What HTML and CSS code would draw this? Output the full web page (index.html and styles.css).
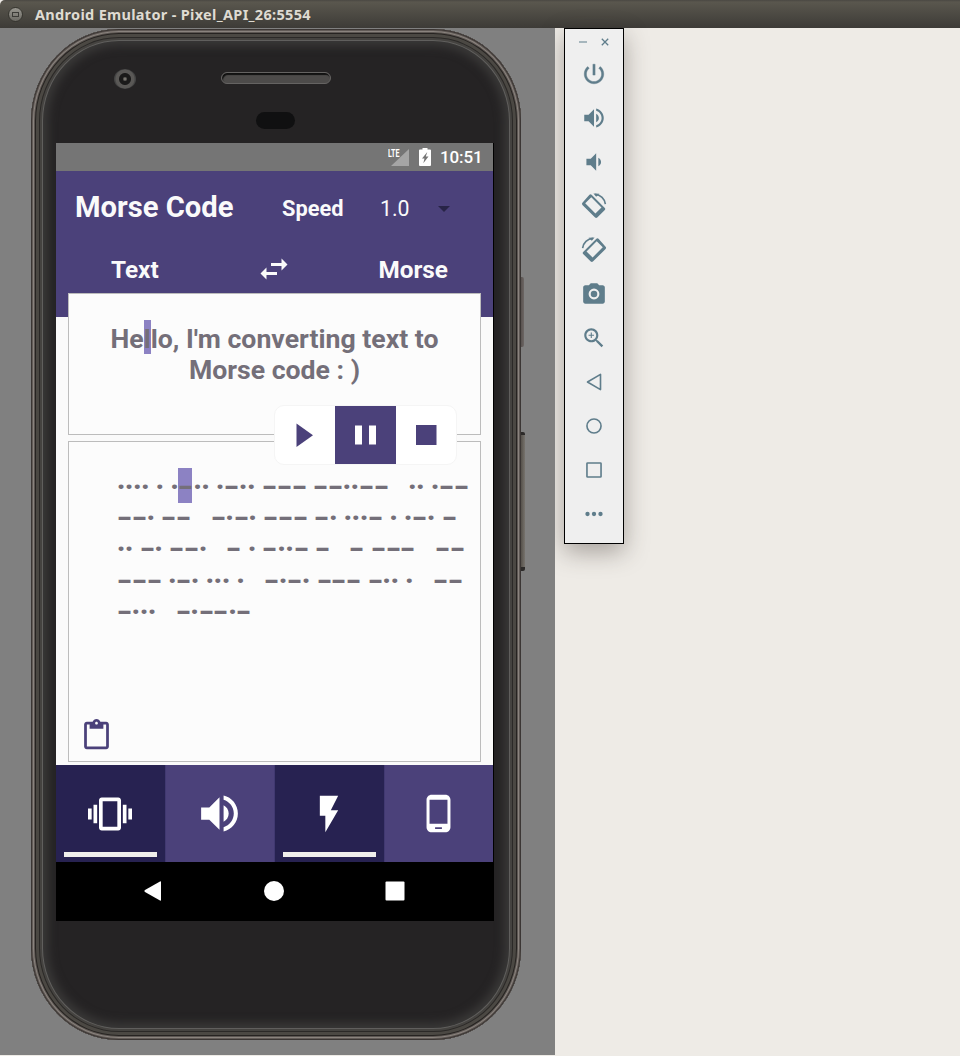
FILE: index.html
```html
<!DOCTYPE html>
<html lang="en">
<head>
<meta charset="utf-8">
<title>Android Emulator</title>
<link rel="stylesheet" href="styles.css">
</head>
<body>
<header class="titlebar"><span class="winbtn"><i></i></span><span class="wintitle">Android Emulator - Pixel_API_26:5554</span></header>
<main class="desktop">
  <section class="stage">
    <div class="rocker power"></div>
    <div class="rocker volume"></div>
    <div class="phone">
      <div class="top">
        <span class="camera"></span>
        <span class="speaker"></span>
        <span class="sensor"></span>
      </div>
      <div class="screen">
        <div class="status">
          <svg class="signal" viewBox="0 0 22 19"><path d="M22 1v17H4z" fill="#a5a5a5"/></svg>
          <span class="lte">LTE</span>
          <svg class="battery" viewBox="0 0 12 18"><path fill="#fff" fill-rule="evenodd" d="M3.500 0h5v1.500H11a1 1 0 0 1 1 1V17a1 1 0 0 1-1 1H1a1 1 0 0 1-1-1V2.500a1 1 0 0 1 1-1h2.500zM8.300 4L3 10.500h2.500L4.300 15.300 9.500 8.500H6.800z"/></svg>
          <span class="clock">10:51</span>
        </div>
        <div class="appbar">
          <div class="approw">
            <h1>Morse Code</h1><span class="speed">Speed</span><span class="value">1.0</span><i class="caret"></i>
          </div>
          <div class="modes">
            <span class="from">Text</span>
            <svg class="swap" viewBox="0 0 24 24"><path d="M6.990 11L3 15l3.990 4v-3H14v-2H6.990v-3zM21 9l-3.990-4v3H10v2h7.010v3L21 9z"/></svg>
            <span class="to">Morse</span>
          </div>
        </div>
        <div class="card input">
          <p>He<mark>l</mark>lo, I'm converting text to<br>Morse code : )</p>
          <div class="player">
            <span><svg viewBox="0 0 60 58"><path d="M21.500 17.500v23.500L38 29.200z"/></svg></span>
            <span class="on"><svg viewBox="0 0 60 58"><path d="M20 19.500h7v19h-7zM34 19.500h7v19h-7z"/></svg></span>
            <span><svg viewBox="0 0 60 58"><path d="M20 19h20.500v20H20z"/></svg></span>
          </div>
        </div>
        <div class="card output">
          <div class="morse" id="morse"></div>
          <svg class="paste" viewBox="0 0 24 24"><path d="M19 2h-4.180C14.400.840 13.300 0 12 0c-1.300 0-2.400.840-2.820 2H5c-1.100 0-2 .9-2 2v16c0 1.100.9 2 2 2h14c1.100 0 2-.9 2-2V4c0-1.100-.9-2-2-2zm-7 0c.550 0 1 .450 1 1s-.450 1-1 1-1-.450-1-1 .450-1 1-1zm7 18H5V4h2v3h10V4h2v16z"/></svg>
        </div>
        <div class="tabs">
          <div class="tab on"><svg width="44" height="44" viewBox="0 0 24 24"><path d="M0 15h2V9H0v6zm3 2h2V7H3v10zm19-8v6h2V9h-2zm-3 8h2V7h-2v10zM16.500 3h-9C6.670 3 6 3.670 6 4.500v15c0 .830.670 1.500 1.500 1.500h9c.830 0 1.500-.670 1.500-1.500v-15c0-.830-.670-1.500-1.500-1.500zM16 19H8V5h8v14z"/></svg></div>
          <div class="tab"><svg width="49" height="49" viewBox="0 0 24 24"><path d="M3 9v6h4l5 5V4L7 9H3zm13.500 3c0-1.770-1.020-3.290-2.500-4.030v8.050c1.480-.730 2.500-2.250 2.500-4.020zM14 3.230v2.060c2.890.860 5 3.540 5 6.710s-2.110 5.850-5 6.710v2.060c4.010-.910 7-4.490 7-8.770s-2.990-7.860-7-8.770z"/></svg></div>
          <div class="tab on"><svg width="44" height="44" viewBox="0 0 24 24"><path d="M7 2v11h3v9l7-12h-4l4-8z"/></svg></div>
          <div class="tab"><svg width="41" height="41" viewBox="0 0 24 24"><path d="M16 1H8C6.340 1 5 2.340 5 4v16c0 1.660 1.340 3 3 3h8c1.660 0 3-1.340 3-3V4c0-1.660-1.340-3-3-3zm-2 20h-4v-1h4v1zm3.250-3H6.750V4h10.500v14z"/></svg></div>
        </div>
        <div class="nav">
          <svg viewBox="0 0 24 24"><path d="M21 3v18q0 1-1 .5L5 13q-1.500-1 0-2l15-8.500q1-.5 1 .5z"/></svg>
          <svg viewBox="0 0 24 24"><circle cx="12" cy="12" r="10"/></svg>
          <svg viewBox="0 0 24 24"><rect x="2.500" y="2.500" width="19" height="19" rx="1"/></svg>
        </div>
      </div>
    </div>
  </section>
  <aside class="toolbar">
    <div class="wincontrols">
      <svg width="8" height="8" viewBox="0 0 8 8"><path d="M0 4h8" stroke="#8ea3ad" stroke-width="1.500"/></svg>
      <svg width="8" height="8" viewBox="0 0 8 8"><path d="M.8.8l6.400 6.400M7.200.8L.8 7.200" stroke="#5f7d8b" stroke-width="1.300"/></svg>
    </div>
    <svg viewBox="0 0 24 24"><path d="M13 3h-2v10h2V3zm4.830 2.170l-1.420 1.420C17.990 7.860 19 9.810 19 12c0 3.870-3.130 7-7 7s-7-3.130-7-7c0-2.190 1.010-4.140 2.580-5.420L6.170 5.170C4.230 6.820 3 9.260 3 12c0 4.970 4.030 9 9 9s9-4.030 9-9c0-2.740-1.230-5.180-3.170-6.830z" stroke="#5f7d8b" stroke-width=".4"/></svg>
    <svg viewBox="0 0 24 24"><path d="M3 9v6h4l5 5V4L7 9H3zm13.500 3c0-1.770-1.020-3.290-2.500-4.030v8.050c1.480-.730 2.500-2.250 2.500-4.020zM14 3.230v2.060c2.890.860 5 3.540 5 6.710s-2.110 5.850-5 6.710v2.060c4.010-.910 7-4.490 7-8.770s-2.990-7.860-7-8.770z"/></svg>
    <svg viewBox="0 0 24 24"><path d="M18.500 12c0-1.770-1.020-3.290-2.500-4.030v8.050c1.480-.730 2.500-2.250 2.500-4.020zM5 9v6h4l5 5V4L9 9H5z"/></svg>
    <svg viewBox="0 0 24 24"><g id="rot"><path fill-rule="evenodd" d="M7.800 1.600q1-.9 2 0L22 13.800q.9 1 0 2L15 22.700q-1 .9-2 0L1.300 11q-.9-1 0-2zM9.500 3.900L3.900 9.500 13.300 18.900l5.600-5.600z"/><path d="M13 1.300c5 .2 9 4 9.500 9" fill="none" stroke="#5f7d8b" stroke-width="1.500"/><path d="M11.500.5l5.500.3-3 2.700z"/></g></svg>
    <svg viewBox="0 0 24 24"><use href="#rot" transform="matrix(-1 0 0 1 24 0)"/></svg>
    <svg viewBox="0 0 24 24"><path fill-rule="evenodd" d="M9 2L7.200 4H4c-1.100 0-2 .9-2 2v13c0 1.100.9 2 2 2h16c1.100 0 2-.9 2-2V6c0-1.100-.9-2-2-2h-3.200L15 2zM12 17a5 5 0 1 1 0-10 5 5 0 0 1 0 10z"/><circle cx="12" cy="12" r="3"/></svg>
    <svg viewBox="0 0 24 24"><path d="M15.500 14h-.790l-.280-.270C15.410 12.590 16 11.110 16 9.500 16 5.910 13.090 3 9.500 3S3 5.910 3 9.500 5.910 16 9.500 16c1.610 0 3.090-.590 4.230-1.570l.270.280v.790l5 4.990L20.490 19l-4.990-5zm-6 0C7.010 14 5 11.990 5 9.500S7.010 5 9.500 5 14 7.010 14 9.500 11.990 14 9.500 14zM12 10h-2v2H9v-2H7V9h2V7h1v2h2v1z"/></svg>
    <svg class="line" viewBox="0 0 24 24"><path d="M18 5v14L6 12z"/></svg>
    <svg class="line" viewBox="0 0 24 24"><circle cx="12" cy="12" r="6.500"/></svg>
    <svg class="line" viewBox="0 0 24 24"><rect x="5.500" y="5.500" width="13" height="13" rx=".6"/></svg>
    <svg viewBox="0 0 24 24"><circle cx="6" cy="12" r="2"/><circle cx="12" cy="12" r="2"/><circle cx="18" cy="12" r="2"/></svg>
  </aside>
</main>
<script src="morse.js"></script>
</body>
</html>
```
FILE: styles.css
```css
* { box-sizing: border-box; }
body { margin: 0; width: 960px; height: 1056px; overflow: hidden; background: #eeebe6; font-family: Roboto, sans-serif; }
svg { display: block; flex: none; }
.titlebar { height: 28px; display: flex; align-items: center; padding-left: 8px; background: linear-gradient(#4a4843, #5a574e 2px, #3d3b37); border-radius: 5px 0 0 0; }
.winbtn { width: 15px; height: 15px; border-radius: 50%; background: linear-gradient(#98968f, #6c6a64); border: 1px solid #36352f; display: flex; align-items: center; justify-content: center; }
.winbtn i { width: 7px; height: 5px; border: 1px solid #3c3b37; }
.wintitle { margin: 0 0 0 12px; font: bold 14.500px/28px "Noto Sans", sans-serif; letter-spacing: .31px; color: #dfdbd2; white-space: nowrap; }
.desktop { display: flex; height: 1028px; align-items: flex-start; }
.stage { position: relative; width: 555px; height: 1027px; padding: 1px 0 0 31px; background: #808080; flex: none; }
.phone { position: relative; width: 490px; height: 1011px; border-radius: 88px / 92px; padding: 0 27px 0 25px; background: #252324;
  box-shadow: inset 0 0 0 1px #3b3634, inset 0 0 0 2px #625b57, inset 0 0 0 3px #8a837e, inset 0 0 0 4px #5c5652, inset 0 0 0 5px #262321, inset 0 0 0 8px #4b4843, inset 0 0 0 9px #2b2927, inset 0 0 0 11px #454340, inset 0 0 0 12px #605f5d, inset 0 0 10px 17px #3a3938; }
.rocker { position: absolute; left: 519px; width: 5px; background: linear-gradient(90deg, #4c4542, #6c6664); border-radius: 2px; }
.power { top: 249px; height: 70px; }
.volume { top: 404px; height: 139px; width: 6px; background: linear-gradient(90deg, #45403a, #77736d); border-top: 3px solid #2c2a29; border-bottom: 4px solid #2c2a29; }
.top { height: 114px; position: relative; }
.camera { position: absolute; left: 58px; top: 40px; width: 22px; height: 20px; border-radius: 50%; background: radial-gradient(circle, #77746e 0 1px, #1b1a1a 2.500px 5.500px, #5a5856 6.500px 9px, #444 10px); }
.speaker { position: absolute; left: 165px; top: 43px; width: 110px; height: 12px; border-radius: 6px; background: #4d4b4a; border: 1px solid #656362; box-shadow: inset 1px 2px 1px #111; }
.sensor { position: absolute; left: 200px; top: 83px; width: 39px; height: 17px; border-radius: 9px; background: #101011; }
.screen { width: 438px; height: 778px; border-right: 1px solid #000; background: #fafafa; display: flex; flex-direction: column; }
.status { height: 28px; background: #757575; display: flex; align-items: center; padding-left: 331px; position: relative; flex: none; }
.signal { width: 22px; height: 19px; }
.lte { position: absolute; left: 332px; top: 4px; font: bold 11px/13px Roboto, sans-serif; color: #fff; transform: scaleX(.65); transform-origin: left; }
.battery { width: 12px; height: 18px; margin-left: 10px; }
.clock { margin-left: 9px; color: #fff; font-size: 17px; font-weight: 500; line-height: 28px; letter-spacing: -.1px; }
.appbar { height: 146px; background: #4b417a; color: #fafafa; flex: none; }
.approw { height: 75px; display: flex; align-items: center; padding-left: 19px; }
h1 { font-size: 29.200px; line-height: 34px; margin: -3px 0 0; width: 207px; white-space: nowrap; }
.speed { font-size: 21.800px; font-weight: bold; width: 98px; }
.value { font-size: 21.300px; width: 58px; }
.caret { border: 6px solid transparent; border-top-color: #282447; border-bottom: 0; }
.modes { height: 46px; display: flex; align-items: center; justify-content: space-between; padding: 0 45px 0 55px; font-size: 24.300px; font-weight: bold; }
.swap { width: 36px; height: 36px; margin: 0 0 0 11px; fill: #fafafa; }
.card { position: relative; margin-left: 12px; width: 413px; border: 1px solid #bcbcbc; background: #fcfcfc; flex: none; }
.input { height: 142px; margin-top: -24px; z-index: 1; padding-top: 30px; }
.input p { margin: 0; text-align: center; font-size: 26.650px; font-weight: bold; line-height: 31px; color: #746f79; white-space: nowrap; }
.input mark { color: inherit; background: linear-gradient(#8c82c3, #8c82c3) 0 0 / 100% 34px no-repeat; padding: 3px 0 0; }
.player { position: absolute; left: 205px; top: 111px; width: 183px; height: 60px; display: flex; border: 1px solid #f5f5f5; border-radius: 10px; background: #fff; overflow: hidden; fill: #4b417a; }
.player span { width: 60.300px; height: 58px; }
.player svg { width: 60px; height: 58px; }
.player .on { background: #4b417a; fill: #fff; }
.output { height: 321px; margin-top: 6px; padding: 30px 0 0 48px; }
.morse { font-size: 26px; font-weight: bold; line-height: 31.200px; color: #746f79; }
.line-row { display: flex; height: 31.200px; }
.dot { width: 8.100px; display: flex; justify-content: center; font-size: 27px; }
.dash { width: 14.900px; display: flex; justify-content: center; }
.dash b { transform: scaleX(.88); margin-left: -1px; }
.gap { width: 6.500px; }
.morse .mark { background: #8c82c3; height: 35px; margin: -4px 1px 0 -1px; padding: 4px 0 0 1px; }
.paste { position: absolute; left: 11px; top: 277px; width: 33px; height: 33px; fill: #4b417a; }
.tabs { display: flex; height: 97px; margin-top: 3px; flex: none; background: #4b417a; }
.tab { position: relative; flex: 1; display: flex; align-items: center; justify-content: center; fill: #fff; border-right: 1px solid #413971; }
.tab:last-child { border-right: 0; }
.tab.on { background: #272251; }
.tab.on::after { content: ""; position: absolute; left: 8px; right: 8px; bottom: 5px; height: 5px; background: #f0efec; }
.nav { flex: 1; background: #000; display: flex; justify-content: space-between; padding: 0 86px 1px 84px; align-items: center; fill: #fff; }
.nav svg { width: 24px; height: 24px; }
.toolbar { margin-left: 9px; width: 60px; height: 516px; border: 1px solid #000; background: #efefef; box-shadow: 0 8px 24px rgba(60,50,45,.4); display: flex; flex-direction: column; align-items: center; fill: #5f7d8b; }
.toolbar > svg { width: 26px; height: 26px; margin-bottom: 18px; }
.wincontrols { display: flex; gap: 14px; height: 32px; padding-top: 9px; flex: none; }
.line { fill: none; stroke: #5f7d8b; stroke-width: 1.500; stroke-linejoin: round; }
```
FILE: morse.js
```js
const lines = [
  ".... . .-.. .-.. --- --..--   .. .--",
  "--. --   -.-. --- -. ...- . .-. -",
  ".. -. --.   - . -..- -   - ---   --",
  "--- .-. ... .   -.-. --- -.. .   --",
  "-...   -.--.-"
];
const box = document.getElementById("morse");
lines.forEach((line, row) => {
  const el = document.createElement("div");
  el.className = "line-row";
  [...line].forEach((c, i) => {
    const s = document.createElement("span");
    if (c === " ") s.className = "gap";
    else {
      s.className = c === "." ? "dot" : "dash";
      const b = document.createElement("b");
      b.textContent = c === "." ? "·" : "–";
      s.append(b);
      if (row === 0 && i === 8) s.classList.add("mark");
    }
    el.append(s);
  });
  box.append(el);
});
```
